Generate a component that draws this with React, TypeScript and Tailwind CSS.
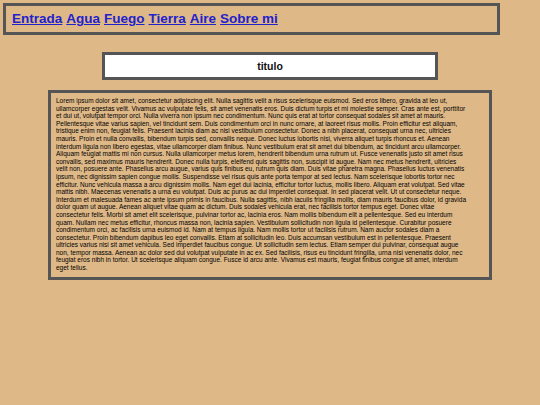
import React from "react";

const LINES = [
  "Lorem ipsum dolor sit amet, consectetur adipiscing elit. Nulla sagittis velit a risus scelerisque euismod. Sed eros libero, gravida at leo ut,",
  "ullamcorper egestas velit. Vivamus ac vulputate felis, sit amet venenatis eros. Duis dictum turpis et mi molestie semper. Cras ante est, porttitor",
  "et dui ut, volutpat tempor orci. Nulla viverra non ipsum nec condimentum. Nunc quis erat at tortor consequat sodales sit amet at mauris.",
  "Pellentesque vitae varius sapien, vel tincidunt sem. Duis condimentum orci in nunc ornare, at laoreet risus mollis. Proin efficitur est aliquam,",
  "tristique enim non, feugiat felis. Praesent lacinia diam ac nisi vestibulum consectetur. Donec a nibh placerat, consequat urna nec, ultricies",
  "mauris. Proin et nulla convallis, bibendum turpis sed, convallis neque. Donec luctus lobortis nisi, viverra aliquet turpis rhoncus et. Aenean",
  "interdum ligula non libero egestas, vitae ullamcorper diam finibus. Nunc vestibulum erat sit amet dui bibendum, ac tincidunt arcu ullamcorper.",
  "Aliquam feugiat mattis mi non cursus. Nulla ullamcorper metus lorem, hendrerit bibendum urna rutrum ut. Fusce venenatis justo sit amet risus",
  "convallis, sed maximus mauris hendrerit. Donec nulla turpis, eleifend quis sagittis non, suscipit id augue. Nam nec metus hendrerit, ultricies",
  "velit non, posuere ante. Phasellus arcu augue, varius quis finibus eu, rutrum quis diam. Duis vitae pharetra magna. Phasellus luctus venenatis",
  "ipsum, nec dignissim sapien congue mollis. Suspendisse vel risus quis ante porta tempor at sed lectus. Nam scelerisque lobortis tortor nec",
  "efficitur. Nunc vehicula massa a arcu dignissim mollis. Nam eget dui lacinia, efficitur tortor luctus, mollis libero. Aliquam erat volutpat. Sed vitae",
  "mattis nibh. Maecenas venenatis a urna eu volutpat. Duis ac purus ac dui imperdiet consequat. In sed placerat velit. Ut ut consectetur neque.",
  "Interdum et malesuada fames ac ante ipsum primis in faucibus. Nulla sagittis, nibh iaculis fringilla mollis, diam mauris faucibus dolor, id gravida",
  "dolor quam ut augue. Aenean aliquet vitae quam ac dictum. Duis sodales vehicula erat, nec facilisis tortor tempus eget. Donec vitae",
  "consectetur felis. Morbi sit amet elit scelerisque, pulvinar tortor ac, lacinia eros. Nam mollis bibendum elit a pellentesque. Sed eu interdum",
  "quam. Nullam nec metus efficitur, rhoncus massa non, lacinia sapien. Vestibulum sollicitudin non ligula id pellentesque. Curabitur posuere",
  "condimentum orci, ac facilisis urna euismod id. Nam at tempus ligula. Nam mollis tortor ut facilisis rutrum. Nam auctor sodales diam a",
  "consectetur. Proin bibendum dapibus leo eget convallis. Etiam at sollicitudin leo. Duis accumsan vestibulum est in pellentesque. Praesent",
  "ultricies varius nisi sit amet vehicula. Sed imperdiet faucibus congue. Ut sollicitudin sem lectus. Etiam semper dui pulvinar, consequat augue",
  "non, tempor massa. Aenean ac dolor sed dui volutpat vulputate in ac ex. Sed facilisis, risus eu tincidunt fringilla, urna nisi venenatis dolor, nec",
  "feugiat eros nibh in tortor. Ut scelerisque aliquam congue. Fusce id arcu ante. Vivamus est mauris, feugiat finibus congue sit amet, interdum",
  "eget tellus.",
];

const links = ["Entrada", "Agua", "Fuego", "Tierra", "Aire", "Sobre mi"];

export default function App() {
  return (
    <div className="w-[540px] h-[405px] bg-[#deb887] pt-[3px] overflow-hidden font-['Liberation_Sans',Arial,sans-serif]">
      <nav className="ml-[3px] w-[497px] h-[32px] border-[3px] border-solid border-[#555555] flex items-center pl-[6px] gap-[4px]">
        {links.map((l) => (
          <a
            key={l}
            href="#"
            className="text-[13.5px] font-bold text-[#2222cc] underline leading-none"
          >
            {l}
          </a>
        ))}
      </nav>
      <div className="mt-[17px] mx-auto w-[336px] h-[28px] bg-white border-[3px] border-solid border-[#555555] flex items-center justify-center">
        <h1 className="text-[10.5px] font-bold text-[#111111] leading-none">titulo</h1>
      </div>
      <div className="mt-[10px] mx-auto w-[444px] border-[3px] border-solid border-[#555555] px-[5px] pt-[4px] pb-[5px]">
        <p className="text-[6.5px] leading-[7.6px] text-black">
          {LINES.map((line, i) => (
            <span key={i} className="block whitespace-nowrap">
              {line}
            </span>
          ))}
        </p>
      </div>
    </div>
  );
}
